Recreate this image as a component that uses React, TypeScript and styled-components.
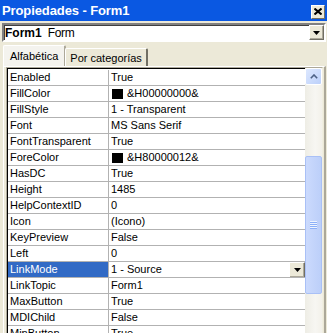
import styled, { createGlobalStyle } from 'styled-components';

const GlobalStyle = createGlobalStyle`
  html, body {
    margin: 0;
    padding: 0;
    background: #ece9d8;
  }
  #root {
    width: 327px;
    height: 333px;
    overflow: hidden;
  }
`;

const Window = styled.div`
  width: 327px;
  height: 333px;
  display: flex;
  flex-direction: column;
  background: #ece9d8;
  font-family: 'Liberation Sans', Arial, sans-serif;
  font-size: 11px;
  color: #000;
  overflow: hidden;
`;

const TitleBar = styled.div`
  height: 21px;
  flex: none;
  display: flex;
  align-items: center;
  justify-content: space-between;
  padding: 0 2px 0 2px;
  background: #0a58e2;
`;

const Title = styled.span`
  color: #fff;
  font-weight: bold;
  font-size: 13px;
  letter-spacing: -0.1px;
`;

const CloseButton = styled.div`
  width: 12px;
  height: 12px;
  margin-top: 2px;
  display: flex;
  align-items: center;
  justify-content: center;
  background: #ece9d8;
  border-top: 1px solid #fff;
  border-left: 1px solid #fff;
  border-right: 1px solid #716f64;
  border-bottom: 1px solid #716f64;
`;

const Combo = styled.div`
  margin: 2px 1px 0 2px;
  height: 15px;
  flex: none;
  display: flex;
  align-items: center;
  background: #fff;
  border-top: 2px solid #808080;
  border-left: 2px solid #808080;
  border-bottom: 2px solid #fff;
  border-right: 2px solid #fff;
  box-shadow: inset 1px 1px 0 #404040;
`;

const ComboText = styled.div`
  flex: 1;
  display: flex;
  align-items: baseline;
  gap: 6px;
  padding-left: 1px;
`;

const ObjectName = styled.span`
  font-weight: bold;
  font-size: 12px;
`;

const ObjectType = styled.span`
  font-size: 12px;
  letter-spacing: -0.3px;
`;

const DropButton = styled.div<{ size: number }>`
  width: ${({ size }) => size}px;
  height: ${({ size }) => size}px;
  box-sizing: border-box;
  display: flex;
  align-items: center;
  justify-content: center;
  background: #ece9d8;
  border-top: 1px solid #fff;
  border-left: 1px solid #fff;
  border-right: 1px solid #716f64;
  border-bottom: 1px solid #716f64;
  box-shadow: inset -1px -1px 0 #aca899;
`;

const TabStrip = styled.div`
  margin: 3px 0 0 3px;
  height: 21px;
  flex: none;
  display: flex;
  align-items: flex-end;
`;

const Tab = styled.div<{ active?: boolean }>`
  height: ${({ active }) => (active ? 21 : 18)}px;
  box-sizing: border-box;
  padding: 0 ${({ active }) => (active ? 6 : 4)}px;
  display: flex;
  align-items: center;
  font-size: 11px;
  background: ${({ active }) => (active ? '#f4f3ee' : '#ece9d8')};
  border-top: 1px solid #fff;
  border-left: 1px solid #fff;
  border-right: 2px solid ${({ active }) => (active ? '#aca899' : '#716f64')};
  border-radius: 2px 2px 0 0;
  margin-left: ${({ active }) => (active ? 0 : -1)}px;
`;

const TabPage = styled.div`
  flex: 1;
  min-height: 0;
  margin-left: 3px;
  width: 323px;
  box-sizing: border-box;
  border-top: 1px solid #fff;
  border-left: 1px solid #fff;
  border-right: 2px solid #aca899;
  padding-left: 2px;
  display: flex;
`;

const Grid = styled.div`
  width: 317px;
  display: flex;
  box-sizing: border-box;
  border-top: 1px solid #aca899;
  border-left: 1px solid #aca899;
  border-right: 1px solid #f1efe2;
  box-shadow: inset 1px 1px 0 #000;
  padding: 1px 0 0 1px;
  background: #fff;
`;

const Rows = styled.div`
  flex: 1;
  padding-top: 1px;
  overflow: hidden;
`;

const Row = styled.div`
  display: flex;
  height: 16px;
  box-sizing: border-box;
  border-bottom: 1px solid #b2b2b2;
`;

const NameCell = styled.div<{ selected?: boolean }>`
  width: 101px;
  flex: none;
  box-sizing: border-box;
  padding-left: 2px;
  line-height: 15px;
  border-right: 1px solid #b2b2b2;
  white-space: nowrap;
  overflow: hidden;
  background: ${({ selected }) => (selected ? '#316ac5' : '#fff')};
  color: ${({ selected }) => (selected ? '#fff' : '#000')};
`;

const ValueCell = styled.div`
  flex: 1;
  display: flex;
  align-items: center;
  padding-left: 2px;
  line-height: 15px;
  white-space: nowrap;
  overflow: hidden;
`;

const ValueText = styled.span`
  flex: 1;
`;

const Swatch = styled.span<{ color: string }>`
  width: 11px;
  height: 10px;
  margin: 0 4px 0 1px;
  flex: none;
  background: ${({ color }) => color};
`;

const ScrollBar = styled.div`
  width: 17px;
  margin-top: -1px;
  flex: none;
  display: flex;
  flex-direction: column;
  background: linear-gradient(to right, #eeede5, #f7f6f2 60%, #f3f1ea);
`;

const ScrollArrow = styled.div`
  height: 17px;
  box-sizing: border-box;
  display: flex;
  align-items: center;
  justify-content: center;
  border: 1px solid #fff;
  border-radius: 2px;
  background: linear-gradient(to bottom right, #dde8fe, #bcd0fa);
`;

const Track = styled.div<{ size: number }>`
  height: ${({ size }) => size}px;
  flex: none;
`;

const Thumb = styled.div<{ size: number }>`
  height: ${({ size }) => size}px;
  flex: none;
  box-sizing: border-box;
  display: flex;
  align-items: center;
  justify-content: center;
  border: 1px solid #a9c0f6;
  border-radius: 2px;
  background: linear-gradient(to right, #cbdafd, #bccff9);
`;

type Prop = { name: string; value: string; color?: string; selected?: boolean };

const props: Prop[] = [
  { name: 'Enabled', value: 'True' },
  { name: 'FillColor', value: '&H00000000&', color: '#000' },
  { name: 'FillStyle', value: '1 - Transparent' },
  { name: 'Font', value: 'MS Sans Serif' },
  { name: 'FontTransparent', value: 'True' },
  { name: 'ForeColor', value: '&H80000012&', color: '#000' },
  { name: 'HasDC', value: 'True' },
  { name: 'Height', value: '1485' },
  { name: 'HelpContextID', value: '0' },
  { name: 'Icon', value: '(Icono)' },
  { name: 'KeyPreview', value: 'False' },
  { name: 'Left', value: '0' },
  { name: 'LinkMode', value: '1 - Source', selected: true },
  { name: 'LinkTopic', value: 'Form1' },
  { name: 'MaxButton', value: 'True' },
  { name: 'MDIChild', value: 'False' },
  { name: 'MinButton', value: 'True' },
];

const DownArrow = () => (
  <svg width="7" height="4" viewBox="0 0 7 4">
    <path d="M0 0h7L3.5 4z" fill="#000" />
  </svg>
);

const App = () => (
  <>
    <GlobalStyle />
    <Window>
      <TitleBar>
        <Title>Propiedades - Form1</Title>
        <CloseButton>
          <svg width="8" height="7" viewBox="0 0 8 7">
            <path d="M0.5 0.5l7 6M7.5 0.5l-7 6" stroke="#000" strokeWidth="2" />
          </svg>
        </CloseButton>
      </TitleBar>
      <Combo>
        <ComboText>
          <ObjectName>Form1</ObjectName>
          <ObjectType>Form</ObjectType>
        </ComboText>
        <DropButton size={15}>
          <DownArrow />
        </DropButton>
      </Combo>
      <TabStrip>
        <Tab active>Alfabética</Tab>
        <Tab>Por categorías</Tab>
      </TabStrip>
      <TabPage>
        <Grid>
          <Rows>
            {props.map((p) => (
              <Row key={p.name}>
                <NameCell selected={p.selected}>{p.name}</NameCell>
                <ValueCell>
                  {p.color && <Swatch color={p.color} />}
                  <ValueText>{p.value}</ValueText>
                  {p.selected && (
                    <DropButton size={16}>
                      <DownArrow />
                    </DropButton>
                  )}
                </ValueCell>
              </Row>
            ))}
          </Rows>
          <ScrollBar>
            <ScrollArrow>
              <svg width="8" height="5" viewBox="0 0 8 5">
                <path d="M0.8 4.2L4 1l3.2 3.2" stroke="#4d6185" strokeWidth="1.6" fill="none" />
              </svg>
            </ScrollArrow>
            <Track size={71} />
            <Thumb size={138}>
              <svg width="7" height="8" viewBox="0 0 7 8">
                {[0, 2, 4, 6].map((y) => (
                  <g key={y}>
                    <rect x="0" y={y} width="7" height="1" fill="#eef4fe" />
                    <rect x="0" y={y + 1} width="7" height="1" fill="#8cb0f8" />
                  </g>
                ))}
              </svg>
            </Thumb>
          </ScrollBar>
        </Grid>
      </TabPage>
    </Window>
  </>
);

export default App;
